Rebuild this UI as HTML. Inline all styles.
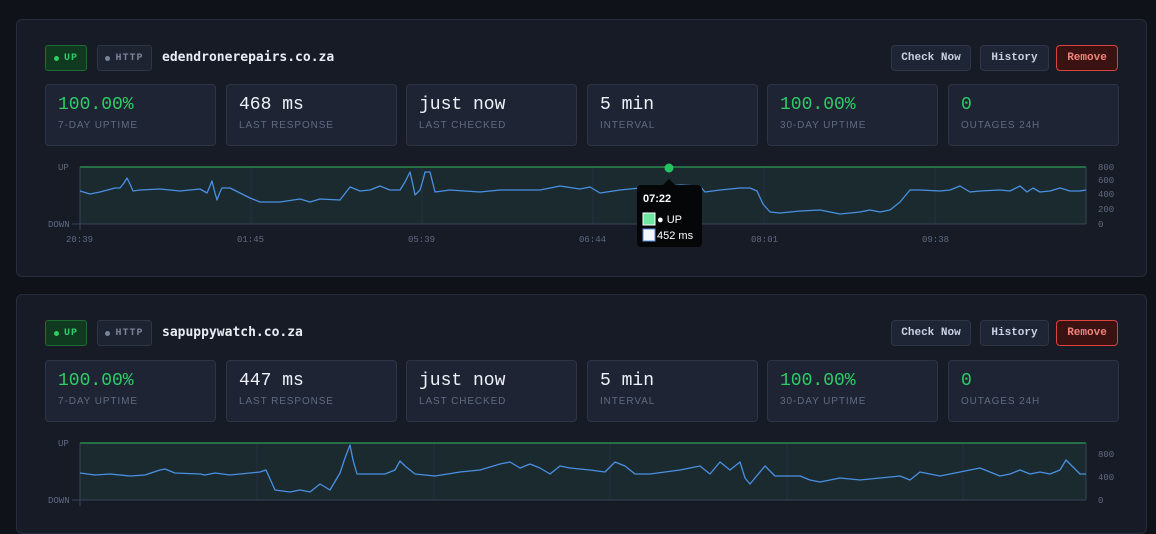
<!DOCTYPE html>
<html><head><meta charset="utf-8"><style>
*{box-sizing:border-box;margin:0;padding:0}
body{width:1156px;height:513px;overflow:hidden;background:#0f1219;font-family:"Liberation Sans",sans-serif;position:relative}
.card{position:absolute;left:16px;width:1131px;background:#161b26;border:1px solid #262d3c;border-radius:6px}
.abs{position:absolute}
.badge{position:absolute;height:26px;border-radius:3px;font:bold 10px "Liberation Mono",monospace;letter-spacing:1px;display:flex;align-items:center;justify-content:center;gap:5px}
.up{left:28px;width:42px;background:#0f3a20;border:1px solid #1d6b35;color:#2ecc65}
.http{left:80px;width:55px;background:#1e2331;border:1px solid #2e3545;color:#7a8499}
.dot{width:5px;height:5px;border-radius:50%;background:currentColor}
.title{position:absolute;left:145px;font:bold 13px "DejaVu Sans Mono","Liberation Mono",monospace;color:#e8edf5;letter-spacing:0px}
.btn{position:absolute;height:26px;border-radius:4px;font:bold 11px "Liberation Mono",monospace;display:flex;align-items:center;justify-content:center;background:#1e2535;border:1px solid #2e3647;color:#c9d3e3}
.stat{position:absolute;width:171px;height:62px;background:#1e2434;border:1px solid #2d3446;border-radius:4px;padding:9px 12px}
.v{font:18px "Liberation Mono",monospace;color:#eef2f8;line-height:22px}
.g{color:#2ecc65}
.l{font:10px "Liberation Sans",sans-serif;color:#5f6b80;letter-spacing:0.9px;margin-top:4px}
svg text{font-family:"Liberation Mono",monospace;font-size:9px;fill:#5f6b80}
</style></head><body>

<div class="card" style="top:19px;height:258px">
 <div class="badge up" style="top:25px"><span class="dot"></span>UP</div>
 <div class="badge http" style="top:25px"><span class="dot"></span>HTTP</div>
 <div class="title" style="top:30px">edendronerepairs.co.za</div>
 <div class="btn" style="left:874px;top:25px;width:80px">Check Now</div>
 <div class="btn" style="left:963px;top:25px;width:69px">History</div>
 <div class="btn" style="left:1039px;top:25px;width:62px;background:#3a1212;border-color:#d9443a;color:#f0837a">Remove</div>
 <div class="stat" style="left:28px;top:64px"><div class="v g">100.00%</div><div class="l">7-DAY UPTIME</div></div>
 <div class="stat" style="left:209px;top:64px"><div class="v">468 ms</div><div class="l">LAST RESPONSE</div></div>
 <div class="stat" style="left:389px;top:64px"><div class="v">just now</div><div class="l">LAST CHECKED</div></div>
 <div class="stat" style="left:570px;top:64px"><div class="v">5 min</div><div class="l">INTERVAL</div></div>
 <div class="stat" style="left:750px;top:64px"><div class="v g">100.00%</div><div class="l">30-DAY UPTIME</div></div>
 <div class="stat" style="left:931px;top:64px"><div class="v g">0</div><div class="l">OUTAGES 24H</div></div>
</div>

<div class="card" style="top:294px;height:240px">
 <div class="badge up" style="top:25px"><span class="dot"></span>UP</div>
 <div class="badge http" style="top:25px"><span class="dot"></span>HTTP</div>
 <div class="title" style="top:30px">sapuppywatch.co.za</div>
 <div class="btn" style="left:874px;top:25px;width:80px">Check Now</div>
 <div class="btn" style="left:963px;top:25px;width:69px">History</div>
 <div class="btn" style="left:1039px;top:25px;width:62px;background:#3a1212;border-color:#d9443a;color:#f0837a">Remove</div>
 <div class="stat" style="left:28px;top:65px"><div class="v g">100.00%</div><div class="l">7-DAY UPTIME</div></div>
 <div class="stat" style="left:209px;top:65px"><div class="v">447 ms</div><div class="l">LAST RESPONSE</div></div>
 <div class="stat" style="left:389px;top:65px"><div class="v">just now</div><div class="l">LAST CHECKED</div></div>
 <div class="stat" style="left:570px;top:65px"><div class="v">5 min</div><div class="l">INTERVAL</div></div>
 <div class="stat" style="left:750px;top:65px"><div class="v g">100.00%</div><div class="l">30-DAY UPTIME</div></div>
 <div class="stat" style="left:931px;top:65px"><div class="v g">0</div><div class="l">OUTAGES 24H</div></div>
</div>

<svg class="abs" style="left:0;top:0" width="1156" height="513">
 <rect x="80" y="167" width="1006" height="57" fill="#1a2a2f"/>
 <g stroke="#263041" stroke-width="1">
  <line x1="251" y1="167" x2="251" y2="224"/><line x1="422" y1="167" x2="422" y2="224"/><line x1="593" y1="167" x2="593" y2="224"/><line x1="764" y1="167" x2="764" y2="224"/><line x1="935" y1="167" x2="935" y2="224"/>
 </g>
 <line x1="80" y1="167" x2="1086" y2="167" stroke="#2f9e57" stroke-width="1.2"/>
 <line x1="72" y1="224" x2="1086" y2="224" stroke="#3a4356"/>
 <line x1="80" y1="167" x2="80" y2="230" stroke="#3a4356"/>
 <line x1="1086" y1="167" x2="1086" y2="224" stroke="#3a4356"/>
 <polyline fill="none" stroke="#4a90e2" stroke-width="1.3" stroke-linejoin="round" points="80,191 90,194 100,192 115,188 120,188 124,183 127,178 130,184 133,191 140,190 160,189 180,191 200,189 207,193 210,186 212,181 215,193 217,200 220,192 222,188 230,188 250,198 260,202 280,202 300,199 310,202 320,199 340,200 350,187 360,191 370,190 380,186 390,190 400,190 405,182 410,172 413,185 415,195 420,190 423,180 425,172 430,172 433,184 435,192 450,190 480,192 500,190 540,190 560,186 580,189 590,187 600,193 620,190 640,188 660,187 670,186 680,185 700,186 705,192 720,190 740,188 750,188 757,191 763,204 770,212 780,213 800,211 820,210 830,212 840,214 850,213 860,212 870,210 880,212 890,210 900,202 910,190 920,190 940,191 950,190 960,186 970,192 980,191 1000,190 1010,191 1020,186 1027,192 1033,188 1040,192 1050,191 1060,188 1070,191 1080,191 1086,190"/>
 <text x="58" y="170">UP</text><text x="48" y="227">DOWN</text>
 <text x="1098" y="170">800</text><text x="1098" y="183">600</text><text x="1098" y="197">400</text><text x="1098" y="212">200</text><text x="1098" y="227">0</text>
 <text x="66" y="242">20:39</text><text x="237" y="242">01:45</text><text x="408" y="242">05:39</text><text x="579" y="242">06:44</text><text x="751" y="242">08:01</text><text x="922" y="242">09:38</text>
 <circle cx="669" cy="168" r="4.5" fill="#22c55e"/>
 <path d="M663 185 L669 179 L675 185 Z" fill="#050608"/>
 <rect x="637" y="185" width="65" height="62" rx="4" fill="#050608"/>
 <text x="643" y="202" style="font-family:'Liberation Sans',sans-serif;font-size:11px;font-weight:bold;fill:#fff">07:22</text>
 <rect x="643" y="213" width="12" height="12" fill="#6ee7a0" stroke="#fff" stroke-width="1"/>
 <text x="657" y="223" style="font-family:'Liberation Sans',sans-serif;font-size:11px;fill:#fff">● UP</text>
 <rect x="643" y="229" width="12" height="12" fill="#f4f7ff" stroke="#5b8de0" stroke-width="1"/>
 <text x="657" y="239" style="font-family:'Liberation Sans',sans-serif;font-size:11px;fill:#fff">452 ms</text>

 <rect x="80" y="443" width="1006" height="57" fill="#1a2a2f"/>
 <g stroke="#263041" stroke-width="1">
  <line x1="257" y1="443" x2="257" y2="500"/><line x1="434" y1="443" x2="434" y2="500"/><line x1="610" y1="443" x2="610" y2="500"/><line x1="787" y1="443" x2="787" y2="500"/><line x1="963" y1="443" x2="963" y2="500"/>
 </g>
 <line x1="80" y1="443" x2="1086" y2="443" stroke="#2f9e57" stroke-width="1.2"/>
 <line x1="72" y1="500" x2="1086" y2="500" stroke="#3a4356"/>
 <line x1="80" y1="443" x2="80" y2="506" stroke="#3a4356"/>
 <line x1="1086" y1="443" x2="1086" y2="500" stroke="#3a4356"/>
 <polyline fill="none" stroke="#4a90e2" stroke-width="1.3" stroke-linejoin="round" points="80,473 95,475 110,474 130,476 145,475 160,470 165,469 175,473 200,474 205,475 215,473 230,475 260,472 266,470 275,490 290,492 300,490 310,492 320,484 330,490 340,473 345,458 350,445 353,460 357,474 365,474 385,474 395,470 400,461 405,466 415,474 435,476 460,472 480,470 500,464 510,462 520,468 530,464 540,468 550,474 560,466 570,468 590,470 605,472 615,462 625,466 635,474 650,474 665,472 680,470 700,466 710,474 720,462 730,470 740,462 745,478 750,484 765,466 775,476 790,476 800,476 810,480 820,482 840,478 860,480 880,478 900,476 910,480 920,472 940,476 960,472 980,468 990,472 1000,476 1010,474 1020,470 1030,474 1040,472 1050,474 1060,470 1066,460 1072,466 1080,474 1086,474"/>
 <text x="58" y="446">UP</text><text x="48" y="503">DOWN</text>
 <text x="1098" y="457">800</text><text x="1098" y="480">400</text><text x="1098" y="503">0</text>
</svg>
</body></html>
